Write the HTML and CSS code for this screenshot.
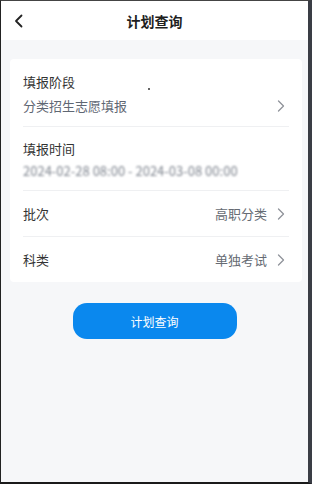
FILE: index.html
```html
<!DOCTYPE html>
<html lang="zh">
<head>
<meta charset="utf-8">
<link rel="stylesheet" href="styles.css">
</head>
<body>
<div class="frame">
  <div class="screen">
    <header class="nav">
      <span class="back">
        <svg width="10" height="14" viewBox="0 0 10 14"><path d="M7.5 1.5 L2 7 L7.5 12.5" fill="none" stroke="#222" stroke-width="1.8" stroke-linecap="round" stroke-linejoin="round"/></svg>
      </span>
      <h1 class="title">计划查询</h1>
    </header>
    <main class="content">
      <section class="card">
        <div class="row stack">
          <div class="label">填报阶段</div>
          <div class="line">
            <span class="value">分类招生志愿填报</span>
            <svg class="chev" width="8" height="12" viewBox="0 0 8 12"><path d="M1.5 1 L6.5 6 L1.5 11" fill="none" stroke="#8f939a" stroke-width="1.3" stroke-linecap="round" stroke-linejoin="round"/></svg>
          </div>
          <span class="dot"></span>
        </div>
        <div class="row stack second">
          <div class="label">填报时间</div>
          <div class="line">
            <span class="value blur">2024-02-28 08:00 - 2024-03-08 00:00</span>
          </div>
        </div>
        <div class="row inline">
          <div class="label">批次</div>
          <div class="right">
            <span class="rvalue">高职分类</span>
            <svg class="chev" width="8" height="12" viewBox="0 0 8 12"><path d="M1.5 1 L6.5 6 L1.5 11" fill="none" stroke="#8f939a" stroke-width="1.3" stroke-linecap="round" stroke-linejoin="round"/></svg>
          </div>
        </div>
        <div class="row inline last">
          <div class="label">科类</div>
          <div class="right">
            <span class="rvalue">单独考试</span>
            <svg class="chev" width="8" height="12" viewBox="0 0 8 12"><path d="M1.5 1 L6.5 6 L1.5 11" fill="none" stroke="#8f939a" stroke-width="1.3" stroke-linecap="round" stroke-linejoin="round"/></svg>
          </div>
        </div>
      </section>
      <div class="actions">
        <button class="btn">计划查询</button>
      </div>
    </main>
  </div>
</div>
</body>
</html>
```

FILE: styles.css
```css
html, body {
  margin: 0;
  padding: 0;
  background: #2a2a2a;
}
body {
  font-family: "Noto Sans CJK SC", "Noto Sans", sans-serif;
}
.frame {
  width: 312px;
  height: 484px;
  box-sizing: border-box;
  border-left: 1px solid #222;
  border-top: 1px solid #444;
  border-bottom: 2px solid #1a1a1a;
  border-right: 4px solid #3a3d45;
  background: #f6f7f9;
  overflow: hidden;
}
.screen {
  width: 307px;
  display: flex;
  flex-direction: column;
  height: 100%;
  background: #f6f7f9;
  border-right: 1px solid #ddd;
}
.nav {
  height: 39px;
  background: #ffffff;
  display: flex;
  align-items: center;
  justify-content: center;
  position: relative;
}
.back {
  position: absolute;
  left: 13px;
  top: 13px;
  display: flex;
}
.title {
  margin: 0;
  font-size: 14px;
  font-weight: 700;
  color: #1f1f1f;
  line-height: 20px;
  margin-top: 1px;
}
.content {
  padding: 19px 6px 0 9px;
}
.card {
  background: #ffffff;
  border-radius: 4px;
  padding: 0 13px;
}
.row {
  border-bottom: 1px solid #eff0f2;
  position: relative;
}
.row.last {
  border-bottom: none;
}
.row.stack {
  padding: 14px 0 11px;
  display: flex;
  flex-direction: column;
  gap: 6px;
}
.row.stack.second {
  padding: 13px 0 10px;
  gap: 4px;
}
.row.inline {
  height: 45px;
  display: flex;
  align-items: center;
  justify-content: space-between;
}
.label {
  font-size: 13px;
  line-height: 18px;
  color: #333333;
}
.line {
  display: flex;
  align-items: center;
  justify-content: space-between;
}
.value {
  font-size: 13px;
  line-height: 18px;
  color: #5f6773;
}
.value.blur {
  color: #7f858f;
  filter: blur(0.8px);
}
.chev {
  margin-right: 4px;
  flex-shrink: 0;
}
.right {
  display: flex;
  align-items: center;
  gap: 10px;
}
.rvalue {
  font-size: 13px;
  line-height: 18px;
  color: #666b73;
}
.dot {
  position: absolute;
  left: 125px;
  top: 29px;
  width: 2px;
  height: 2px;
  background: #333;
  border-radius: 1px;
}
.actions {
  display: flex;
  justify-content: center;
  padding-top: 21px;
  padding-right: 3px;
}
.btn {
  width: 164px;
  height: 36px;
  border: none;
  border-radius: 14px;
  background: #0a88ee;
  color: #ffffff;
  font-family: "Noto Sans CJK SC", "Noto Sans", sans-serif;
  font-size: 12px;
  padding: 0;
}
```
